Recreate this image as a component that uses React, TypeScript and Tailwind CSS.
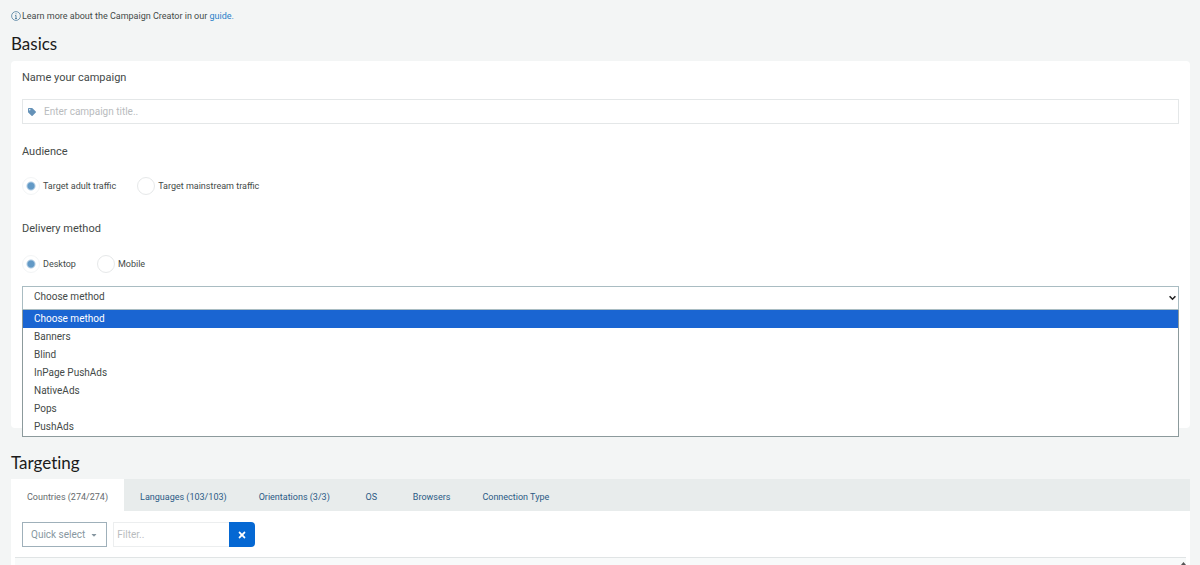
import { useState } from 'react';
import { FaTag, FaTimes, FaCaretDown } from 'react-icons/fa';

const METHODS = ['Choose method', 'Banners', 'Blind', 'InPage PushAds', 'NativeAds', 'Pops', 'PushAds'];

const TABS = [
  { id: 'countries', label: 'Countries (274/274)' },
  { id: 'languages', label: 'Languages (103/103)' },
  { id: 'orientations', label: 'Orientations (3/3)' },
  { id: 'os', label: 'OS' },
  { id: 'browsers', label: 'Browsers' },
  { id: 'connection', label: 'Connection Type' },
];

export default function App() {
  const [title, setTitle] = useState('');
  const [audience, setAudience] = useState('adult');
  const [device, setDevice] = useState('desktop');

  return (
    <main className="flex h-screen flex-col overflow-hidden bg-[#f3f5f5] pt-2 pr-2.5 pl-[11px] font-['Roboto','Liberation_Sans',sans-serif] text-[9px] leading-4 text-[#444a48]">
      <p className="flex h-4 items-center gap-px">
        <InfoIcon />
        <span>
          Learn more about the Campaign Creator in our <a href="#guide" className="text-[#2a7fc9]">guide.</a>
        </span>
      </p>

      {/* --- BASICS --- */}
      <SectionTitle>Basics</SectionTitle>
      <section className="mt-[5px] h-[367px] shrink-0 rounded-sm bg-white px-[11px] pt-[9px]">
        <label htmlFor="title" className="block text-[11px] leading-4">Name your campaign</label>
        <div className="mt-[13px] flex h-[25px] items-center border border-[#e4e7e8] px-[5px]">
          <FaTag size={8} className="text-[#6592b8]" />
          <input
            id="title"
            placeholder="Enter campaign title.."
            className="min-w-0 flex-1 px-2 text-[10px] outline-none placeholder:text-[#b9bcbe]"
            value={title}
            onChange={(e) => setTitle(e.target.value)}
          />
        </div>

        <h3 className="mt-5 text-[11px] leading-4">Audience</h3>
        <div className="mt-[17px] flex gap-[21px]">
          <Radio name="audience" label="Target adult traffic" checked={audience === 'adult'} onChange={() => setAudience('adult')} />
          <Radio name="audience" label="Target mainstream traffic" checked={audience === 'mainstream'} onChange={() => setAudience('mainstream')} />
        </div>

        <h3 className="mt-[26px] text-[11px] leading-4">Delivery method</h3>
        <div className="mt-[18px] flex gap-[21px]">
          <Radio name="device" label="Desktop" checked={device === 'desktop'} onChange={() => setDevice('desktop')} />
          <Radio name="device" label="Mobile" checked={device === 'mobile'} onChange={() => setDevice('mobile')} />
        </div>

        <MethodSelect />
      </section>

      {/* --- TARGETING --- */}
      <div className="mt-[15px]">
        <SectionTitle>Targeting</SectionTitle>
      </div>
      <section className="mt-1 flex min-h-0 flex-1 flex-col bg-white">
        <Tabs />
        <div className="flex px-[11px] pt-[11px] pb-2.5">
          <button className="flex h-[25px] items-center gap-[5px] border border-[#9fb0ba] px-2 text-[10px] text-[#8797a1]">
            Quick select
            <FaCaretDown size={8} />
          </button>
          <input aria-label="Filter" placeholder="Filter.." className="ml-[6px] h-[25px] w-[116px] border border-r-0 border-[#eceeef] px-[3px] text-[10px] outline-none placeholder:text-[#b9bcbe]" />
          <button aria-label="Clear filter" className="flex h-[25px] w-[26px] items-center justify-center rounded-r-sm bg-[#0568d3] text-white">
            <FaTimes size={10} />
          </button>
        </div>
        <div className="mx-1 flex min-h-0 flex-1 justify-end overflow-hidden border-t border-[#e0e4e5] bg-[#f8fafa] pt-1">
          <svg width="5" height="4" viewBox="0 0 5 4" fill="#555"><path d="M2.5 0 5 3H0z" /></svg>
        </div>
      </section>
    </main>
  );
}

function SectionTitle({ children }: { children: string }) {
  return <h2 className="mt-2 font-['Lato',sans-serif] text-[17px] leading-6 text-[#1b1b1b] [font-variant-ligatures:none]">{children}</h2>;
}

function Radio({ name, label, checked, onChange }: { name: string, label: string, checked: boolean, onChange: () => void }) {
  return (
    <label className="flex h-[18px] items-center gap-[3px]">
      <input
        type="radio"
        name={name}
        checked={checked}
        onChange={onChange}
        className="size-[18px] appearance-none rounded-full border border-[#e6e8e9] bg-white checked:border-[#f3f5f6] checked:bg-[radial-gradient(circle,#6299c6_0,#6299c6_3px,#ffffff_5px)]"
      />
      {label}
    </label>
  );
}

// Select with its option list opened below it
function MethodSelect() {
  const [method, setMethod] = useState(METHODS[0]);

  return (
    <div className="relative mt-[13px] text-[10px]">
      <select
        aria-label="Delivery method"
        className="block h-6 w-full appearance-none border border-[#a9bcc2] bg-white px-[11px] pb-0.5 outline-none"
        value={method}
        onChange={(e) => setMethod(e.target.value)}
      >
        {METHODS.map((m) => <option key={m}>{m}</option>)}
      </select>
      <svg className="pointer-events-none absolute top-[9px] right-[3px]" width="7" height="6" viewBox="0 0 7 6" fill="none" stroke="#222" strokeWidth="1.6">
        <path d="M.6 1.2 3.5 4.2 6.4 1.2" />
      </svg>
      <ul role="listbox" aria-label="Methods" className="absolute inset-x-0 top-full z-10 border border-t-0 border-[#8c9a9c] bg-white">
        {METHODS.map((m) => (
          <li
            key={m}
            role="option"
            aria-selected={m === method}
            onClick={() => setMethod(m)}
            className={`h-[18px] px-[11px] leading-[18px] ${m === method ? 'bg-[#1a65d2] text-white' : ''}`}
          >
            {m}
          </li>
        ))}
      </ul>
    </div>
  );
}

function Tabs() {
  const [active, setActive] = useState('countries');

  return (
    <div role="tablist" className="flex h-8 shrink-0 bg-[#e8ecec]">
      {TABS.map((t) => (
        <button
          key={t.id}
          role="tab"
          aria-selected={t.id === active}
          onClick={() => setActive(t.id)}
          className={`min-w-[51px] px-4 pt-1 ${t.id === active ? 'bg-white text-[#666b6e]' : 'text-[#2b5a85]'}`}
        >
          {t.label}
        </button>
      ))}
    </div>
  );
}

function InfoIcon() {
  return (
    <svg width="10" height="10" viewBox="0 0 10 10" fill="none" stroke="#4f7f9f">
      <circle cx="5" cy="5" r="4.4" strokeWidth=".8" />
      <path d="M5 4.4V7.6M4 4.6H5M4 7.5H6M5 2.3V3.3" strokeWidth=".9" />
    </svg>
  );
}
